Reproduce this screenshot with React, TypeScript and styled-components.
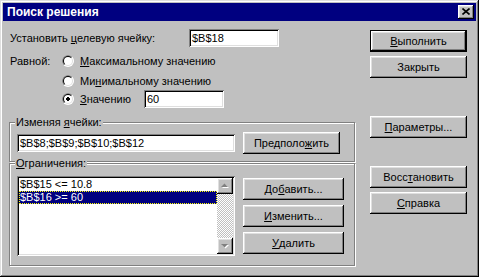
import React from "react";
import styled, { createGlobalStyle, css } from "styled-components";

const GlobalStyle = createGlobalStyle`
  html, body {
    margin: 0;
    padding: 0;
    background: #c0c0c0;
  }
  body {
    font-family: "Liberation Sans", Arial, sans-serif;
    font-size: 11px;
    color: #000;
  }
  * {
    box-sizing: border-box;
  }
`;

const raised = css`
  box-shadow: inset -1px -1px #000, inset 1px 1px #fff, inset -2px -2px #808080,
    inset 2px 2px #dfdfdf;
`;

const sunken = css`
  box-shadow: inset 1px 1px #808080, inset -1px -1px #fff, inset 2px 2px #000,
    inset -2px -2px #dfdfdf;
`;

const Window = styled.div`
  width: 479px;
  height: 277px;
  padding: 3px;
  background: #c0c0c0;
  box-shadow: inset -1px -1px #000, inset 1px 1px #dfdfdf, inset -2px -2px #808080,
    inset 2px 2px #fff;
  display: flex;
  flex-direction: column;
`;

const TitleBar = styled.div`
  height: 18px;
  background: #000080;
  color: #fff;
  display: flex;
  align-items: center;
  justify-content: space-between;
  padding: 0 2px 0 4px;
  font-weight: bold;
  font-size: 12px;
`;

const CloseButton = styled.div`
  width: 16px;
  height: 14px;
  background: #c0c0c0;
  ${raised};
  display: flex;
  align-items: center;
  justify-content: center;
  padding-bottom: 1px;
`;

const Body = styled.div`
  flex: 1;
  display: grid;
  grid-template-columns: 346px 97px;
  column-gap: 15px;
  align-items: start;
  padding: 8px 0 0 6px;
`;

const LeftColumn = styled.div`
  display: flex;
  flex-direction: column;
`;

const RightColumn = styled.div`
  display: flex;
  flex-direction: column;
  padding-top: 1px;
`;

const Key = styled.span`
  text-decoration: underline;
  text-underline-offset: 1px;
`;

const TargetRow = styled.div`
  display: grid;
  grid-template-columns: 179px 90px;
  align-items: center;
  height: 18px;
  padding-left: 1px;
`;

const TextField = styled.div<{ $width: number }>`
  width: ${(p) => p.$width}px;
  height: 18px;
  background: #fff;
  ${sunken};
  padding: 0 3px;
  display: flex;
  align-items: center;
  white-space: nowrap;
  overflow: hidden;
`;

const ChoiceGrid = styled.div`
  display: grid;
  grid-template-columns: 53px 1fr;
  grid-template-rows: 20px 19px 18px;
  margin-top: 4px;
`;

const ChoiceLabel = styled.div`
  padding-left: 1px;
  display: flex;
  align-items: center;
`;

const Option = styled.div<{ $row: number }>`
  grid-column: 2;
  grid-row: ${(p) => p.$row};
  display: flex;
  align-items: center;
  gap: 6px;
`;

const OptionText = styled.span<{ $width?: number }>`
  ${(p) => (p.$width ? `width: ${p.$width}px;` : "")}
  white-space: nowrap;
`;

const Group = styled.div<{ $height: number; $top: number; $padTop: number }>`
  position: relative;
  height: ${(p) => p.$height}px;
  margin-top: ${(p) => p.$top}px;
  border: 1px solid #808080;
  box-shadow: inset 1px 1px #fff, 1px 1px #fff;
  padding: ${(p) => p.$padTop}px 0 0 7px;
`;

const Legend = styled.div`
  position: absolute;
  top: -8px;
  left: 5px;
  padding: 0 1px;
  line-height: 14px;
  background: #c0c0c0;
  white-space: nowrap;
`;

const GroupRow = styled.div<{ $align: string }>`
  display: flex;
  align-items: ${(p) => p.$align};
  gap: 8px;
`;

const Button = styled.div<{ $width?: number; $default?: boolean; $top?: number }>`
  width: ${(p) => p.$width ?? 97}px;
  height: 22px;
  margin-top: ${(p) => p.$top ?? 0}px;
  background: #c0c0c0;
  display: flex;
  align-items: center;
  justify-content: center;
  white-space: nowrap;
  padding-bottom: 1px;
  ${raised};
  ${(p) =>
    p.$default &&
    css`
      border: 1px solid #000;
    `}
`;

const ButtonStack = styled.div`
  display: flex;
  flex-direction: column;
  gap: 5px;
  margin-top: 2px;
`;

const ListBox = styled.div`
  width: 218px;
  height: 80px;
  background: #fff;
  ${sunken};
  padding: 2px;
  display: flex;
`;

const ListItems = styled.div`
  flex: 1;
  display: flex;
  flex-direction: column;
`;

const ListItem = styled.div<{ $selected?: boolean }>`
  height: 13px;
  line-height: 13px;
  padding-left: 1px;
  white-space: nowrap;
  ${(p) =>
    p.$selected &&
    css`
      background: #000080;
      color: #fff;
      outline: 1px dotted #ffff00;
      outline-offset: -1px;
    `}
`;

const ScrollBar = styled.div`
  width: 16px;
  display: flex;
  flex-direction: column;
  justify-content: space-between;
  background-image: conic-gradient(#fff 25%, #c0c0c0 0 50%, #fff 0 75%, #c0c0c0 0);
  background-size: 2px 2px;
`;

const ScrollButton = styled.div`
  width: 16px;
  height: 16px;
  background: #c0c0c0;
  ${raised};
  display: flex;
  align-items: center;
  justify-content: center;
`;

function Radio({ checked }: { checked?: boolean }) {
  return (
    <svg width="12" height="12" viewBox="0 0 12 12">
      <defs>
        <clipPath id="tl">
          <polygon points="0,0 12,0 0,12" />
        </clipPath>
      </defs>
      <circle cx="6" cy="6" r="6" fill="#fff" />
      <circle cx="6" cy="6" r="6" fill="#808080" clipPath="url(#tl)" />
      <circle cx="6" cy="6" r="5" fill="#dfdfdf" />
      <circle cx="6" cy="6" r="5" fill="#000" clipPath="url(#tl)" />
      <circle cx="6" cy="6" r="4" fill="#fff" />
      {checked && <path d="M5 4h2v1h1v2h-1v1h-2v-1h-1v-2h1z" fill="#000" />}
    </svg>
  );
}

function Arrow({ down }: { down?: boolean }) {
  const pts = down ? "4,6 11,6 7.5,9.5" : "7.5,5.5 11,9 4,9";
  return (
    <svg width="16" height="16" viewBox="0 0 16 16">
      <polygon points={pts} fill="#fff" transform="translate(1,1)" />
      <polygon points={pts} fill="#808080" />
    </svg>
  );
}

export default function App() {
  return (
    <>
      <GlobalStyle />
      <Window>
        <TitleBar>
          <span>Поиск решения</span>
          <CloseButton>
            <svg width="8" height="7" viewBox="0 0 8 7">
              <path d="M0.5 0.5L7.5 6.5M7.5 0.5L0.5 6.5" stroke="#000" strokeWidth="1.6" />
            </svg>
          </CloseButton>
        </TitleBar>
        <Body>
          <LeftColumn>
            <TargetRow>
              <span>
                Установить <Key>ц</Key>елевую ячейку:
              </span>
              <TextField $width={90}>$B$18</TextField>
            </TargetRow>
            <ChoiceGrid>
              <ChoiceLabel>Равной:</ChoiceLabel>
              <Option $row={1}>
                <Radio />
                <OptionText>
                  <Key>М</Key>аксимальному значению
                </OptionText>
              </Option>
              <Option $row={2}>
                <Radio />
                <OptionText>
                  Ми<Key>н</Key>имальному значению
                </OptionText>
              </Option>
              <Option $row={3}>
                <Radio checked />
                <OptionText $width={58}>
                  <Key>З</Key>начению
                </OptionText>
                <TextField $width={80}>60</TextField>
              </Option>
            </ChoiceGrid>
            <Group $height={40} $top={14} $padTop={9}>
              <Legend>
                Изменяя <Key>я</Key>чейки:
              </Legend>
              <GroupRow $align="center">
                <TextField $width={218}>$B$8;$B$9;$B$10;$B$12</TextField>
                <Button $width={97}>
                  Предполо<Key>ж</Key>ить
                </Button>
              </GroupRow>
            </Group>
            <Group $height={103} $top={1} $padTop={12}>
              <Legend>
                <Key>О</Key>граничения:
              </Legend>
              <GroupRow $align="flex-start">
                <ListBox>
                  <ListItems>
                    <ListItem>$B$15 &lt;= 10.8</ListItem>
                    <ListItem $selected>$B$16 &gt;= 60</ListItem>
                  </ListItems>
                  <ScrollBar>
                    <ScrollButton>
                      <Arrow />
                    </ScrollButton>
                    <ScrollButton>
                      <Arrow down />
                    </ScrollButton>
                  </ScrollBar>
                </ListBox>
                <ButtonStack>
                  <Button $width={101}>
                    До<Key>б</Key>авить...
                  </Button>
                  <Button $width={101}>
                    <Key>И</Key>зменить...
                  </Button>
                  <Button $width={101}>
                    <Key>У</Key>далить
                  </Button>
                </ButtonStack>
              </GroupRow>
            </Group>
          </LeftColumn>
          <RightColumn>
            <Button $default>
              <Key>В</Key>ыполнить
            </Button>
            <Button $top={4}>Закрыть</Button>
            <Button $top={38}>
              <Key>П</Key>араметры...
            </Button>
            <Button $top={28}>
              Восс<Key>т</Key>ановить
            </Button>
            <Button $top={4}>
              <Key>С</Key>правка
            </Button>
          </RightColumn>
        </Body>
      </Window>
    </>
  );
}
